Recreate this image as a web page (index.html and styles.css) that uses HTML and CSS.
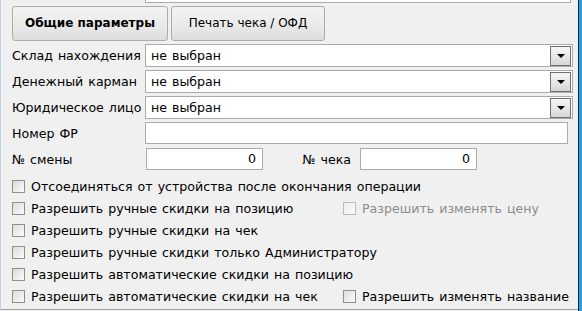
FILE: index.html
```html
<!DOCTYPE html>
<html lang="ru">
   <head>
      <meta charset="utf-8" />
      <title>Настройки ФР</title>
      <link rel="stylesheet" href="styles.css">
   </head>
   <body>
      <div class="window">
         <div class="panel">
            <div class="top-field"></div>

            <div class="tabs">
               <div class="tab active">Общие параметры</div>
               <div class="tab">Печать чека / ОФД</div>
            </div>

            <div class="fields">
               <div class="row">
                  <span class="label">Склад нахождения</span>
                  <div class="combo"><span>не выбран</span><i class="drop"></i></div>
               </div>
               <div class="row">
                  <span class="label">Денежный карман</span>
                  <div class="combo"><span>не выбран</span><i class="drop"></i></div>
               </div>
               <div class="row">
                  <span class="label">Юридическое лицо</span>
                  <div class="combo"><span>не выбран</span><i class="drop"></i></div>
               </div>
               <div class="row row-text">
                  <span class="label">Номер ФР</span>
                  <div class="edit"></div>
               </div>
               <div class="row row-text">
                  <span class="label">№ смены</span>
                  <div class="edit num shift">0</div>
                  <span class="label label-check">№ чека</span>
                  <div class="edit num">0</div>
               </div>
            </div>

            <div class="checks">
               <div class="check-row">
                  <label class="check"><i class="box"></i>Отсоединяться от устройства после окончания операции</label>
               </div>
               <div class="check-row">
                  <label class="check"><i class="box"></i>Разрешить ручные скидки на позицию</label>
                  <label class="check side disabled"><i class="box"></i>Разрешить изменять цену</label>
               </div>
               <div class="check-row">
                  <label class="check"><i class="box"></i>Разрешить ручные скидки на чек</label>
               </div>
               <div class="check-row">
                  <label class="check"><i class="box"></i>Разрешить ручные скидки только Администратору</label>
               </div>
               <div class="check-row">
                  <label class="check"><i class="box"></i>Разрешить автоматические скидки на позицию</label>
               </div>
               <div class="check-row">
                  <label class="check"><i class="box"></i>Разрешить автоматические скидки на чек</label>
                  <label class="check side"><i class="box"></i>Разрешить изменять название</label>
               </div>
            </div>

            <div class="bottom-line"></div>
         </div>
      </div>
   </body>
</html>
```

FILE: styles.css
```css
html, body {
   margin: 0;
   padding: 0;
}

body {
   width: 582px;
   height: 311px;
   overflow: hidden;
   background: #f0f0f0;
   font-family: "DejaVu Sans", Verdana, sans-serif;
   font-size: 12.6px;
   word-spacing: 1px;
   color: #000;
}

.window {
   height: 311px;
   border-left: 1px solid #b9d1ea;
   border-right: 3px solid #2c9ee3;
   box-sizing: border-box;
}

.panel {
   height: 311px;
   border-right: 1px solid #1b2633;
   box-sizing: border-box;
   position: relative;
}

.top-field {
   margin-left: 144px;
   width: 424px;
   height: 2px;
   background: #fff;
   border: 1px solid #ababab;
   border-top: none;
}

/* tab buttons */
.tabs {
   display: flex;
   gap: 3px;
   margin: 3px 0 0 11px;
}

.tab {
   height: 33px;
   line-height: 33px;
   border: 1px solid #acacac;
   border-radius: 3px;
   background: linear-gradient(#f3f3f3, #ebebeb 50%, #dddddd);
   text-align: center;
   font-size: 12px;
   word-spacing: 0;
}

.tab:first-child {
   width: 154px;
}

.tab:last-child {
   width: 152px;
}

.tab.active {
   font-weight: bold;
}

/* combos and edits */
.fields {
   margin: 3px 0 0 11px;
}

.row {
   display: flex;
   align-items: center;
   height: 23px;
   margin-bottom: 3px;
}

.row-text {
   height: 22px;
   margin-bottom: 4px;
}

.label {
   width: 133px;
   white-space: nowrap;
}

.combo {
   width: 421px;
   height: 21px;
   border: 1px solid #ababab;
   background: #fff;
   display: flex;
   align-items: center;
   justify-content: space-between;
   padding-left: 5px;
   box-sizing: content-box;
}

.drop {
   width: 19px;
   height: 18px;
   margin-right: 1px;
   border: 1px solid #707070;
   background: linear-gradient(#f6f6f6, #e9e9e9 50%, #d6d6d6);
   position: relative;
}

.drop::after {
   content: "";
   position: absolute;
   left: 6px;
   top: 7px;
   border-left: 4px solid transparent;
   border-right: 4px solid transparent;
   border-top: 4px solid #000;
}

.edit {
   width: 421px;
   height: 20px;
   border: 1px solid #ababab;
   background: #fff;
   box-sizing: content-box;
}

.edit.num {
   width: 109px;
   padding-right: 6px;
   line-height: 20px;
   text-align: right;
}

.edit.shift {
   margin-left: 1px;
}

.label-check {
   width: 88px;
   margin-right: 9px;
   text-align: right;
}

/* checkboxes */
.checks {
   margin: 5px 0 0 11px;
}

.check-row {
   display: flex;
   align-items: center;
   height: 22px;
}

.check {
   display: flex;
   align-items: center;
   white-space: nowrap;
}

.check.side {
   position: absolute;
   left: 342px;
}

.box {
   width: 11px;
   height: 11px;
   border: 1px solid #8e8f8f;
   background: linear-gradient(135deg, #dcdcdc, #fbfbfb);
   margin-right: 6px;
}

.check.disabled {
   color: #8d8d8d;
}

.check.disabled .box {
   border-color: #bcbcbc;
   background: linear-gradient(135deg, #ececec, #fcfcfc);
}

.bottom-line {
   position: absolute;
   left: 0;
   right: 0;
   top: 309px;
   height: 1px;
   background: #a0a0a0;
}
```
